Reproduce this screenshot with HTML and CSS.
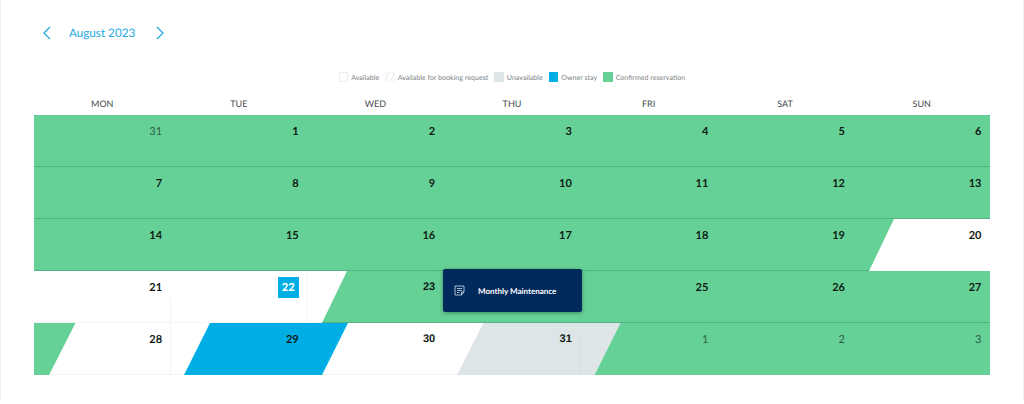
FILE: index.html
```html
<!DOCTYPE html>
<html lang="en">
<head>
<meta charset="utf-8">
<title>August 2023</title>
<link rel="stylesheet" href="styles.css">
</head>
<body>
<main class="page">
  <header class="month-nav">
    <svg class="chevron" width="10" height="14" viewBox="0 0 10 14"><path d="M8 1 2 7l6 6"/></svg>
    <h1 class="month-title">August 2023</h1>
    <svg class="chevron" width="10" height="14" viewBox="0 0 10 14"><path d="M2 1l6 6-6 6"/></svg>
  </header>
  <ul class="legend">
    <li class="legend-item"><span class="swatch swatch-available"></span>Available</li>
    <li class="legend-item"><span class="swatch swatch-request"></span>Available for booking request</li>
    <li class="legend-item"><span class="swatch swatch-unavailable"></span>Unavailable</li>
    <li class="legend-item"><span class="swatch swatch-owner"></span>Owner stay</li>
    <li class="legend-item"><span class="swatch swatch-confirmed"></span>Confirmed reservation</li>
  </ul>
  <section class="calendar">
    <div class="weekdays"><span>MON</span><span>TUE</span><span>WED</span><span>THU</span><span>FRI</span><span>SAT</span><span>SUN</span></div>
    <div class="week week-green">
      <span class="day muted">31</span><span class="day">1</span><span class="day">2</span><span class="day">3</span><span class="day">4</span><span class="day">5</span><span class="day">6</span>
    </div>
    <div class="week week-green">
      <span class="day">7</span><span class="day">8</span><span class="day">9</span><span class="day">10</span><span class="day">11</span><span class="day">12</span><span class="day">13</span>
    </div>
    <div class="week">
      <svg class="bands" viewBox="0 0 956 52" preserveAspectRatio="none">
        <polygon class="band-green" points="0,0 860,0 835,52 0,52"/>
        <path class="edge" d="M0 51.500H835"/>
      </svg>
      <span class="day">14</span><span class="day">15</span><span class="day">16</span><span class="day">17</span><span class="day">18</span><span class="day">19</span><span class="day">20</span>
    </div>
    <div class="week">
      <svg class="bands" viewBox="0 0 956 52" preserveAspectRatio="none">
        <path class="gridline" d="M136.500 26V52M273 0V52M0 51.500H288"/>
        <polygon class="band-green" points="313,0 956,0 956,52 288,52"/>
        <path class="edge" d="M288 51.500H956"/>
      </svg>
      <span class="day">21</span><span class="day"><b class="today">22</b></span><span class="day alt">23</span><span class="day">24</span><span class="day">25</span><span class="day">26</span><span class="day">27</span>
      <div class="note">
        <svg class="note-icon" width="11" height="11" viewBox="0 0 11 11"><path d="M1 1h9v6L7.500 10H1zM3 3.500h5M3 5.500h5M3 7.500h2.500M7.500 10V7H10"/></svg>
        <span>Monthly Maintenance</span>
      </div>
    </div>
    <div class="week">
      <svg class="bands" viewBox="0 0 956 52" preserveAspectRatio="none">
        <path class="gridline" d="M136.500 0V52M273 0V52M0 51.500H423"/>
        <polygon class="band-green" points="0,0 41.500,0 15,52 0,52"/>
        <polygon class="band-blue" points="176,0 314,0 288,52 150,52"/>
        <polygon class="band-grey" points="449.500,0 586.500,0 560.500,52 423,52"/>
        <path class="grey-line" d="M546.500 13V52"/>
        <polygon class="band-green" points="586.500,0 956,0 956,52 560.500,52"/>
      </svg>
      <span class="day">28</span><span class="day">29</span><span class="day alt">30</span><span class="day alt">31</span><span class="day muted">1</span><span class="day muted">2</span><span class="day muted">3</span>
    </div>
  </section>
</main>
</body>
</html>
```
FILE: styles.css
```css
* { box-sizing: border-box; }
html, body { margin: 0; background: #fff; }
body {
  font-family: Lato, "Open Sans", sans-serif;
  overflow: hidden;
  text-rendering: geometricPrecision;
}
.page {
  height: 400px;
  padding: 0 33px;
  border-left: 1px solid #f1f1f1;
  border-right: 1px solid #f1f1f1;
}
.month-nav {
  display: flex;
  align-items: center;
  height: 66px;
  padding-left: 8px;
}
.chevron { fill: none; stroke: #22a9de; stroke-width: 1.300; flex: none; }
.month-title {
  margin: 0 0 0 17px;
  width: 85.500px;
  font-size: 11.700px;
  font-weight: 400;
  color: #22a9de;
  white-space: nowrap;
}
.legend {
  display: flex;
  justify-content: center;
  align-items: center;
  gap: 6px;
  margin: 0;
  padding: 0;
  height: 22px;
  list-style: none;
  font-size: 7.100px;
  color: #7d8588;
}
.legend-item { display: flex; align-items: center; gap: 3px; white-space: nowrap; }
.swatch { width: 9.500px; height: 9.500px; flex: none; }
.swatch-available { border: 1px solid #eceeef; background: #fff; }
.swatch-request {
  border: 1px solid #f4f5f6;
  background: repeating-linear-gradient(115deg, #fff 0 2px, #e9ecee 2px 3px, #fff 3px 5px);
}
.swatch-unavailable { background: #dde5e7; }
.swatch-owner { background: #00aee6; }
.swatch-confirmed { background: #65d196; }
.weekdays {
  display: grid;
  grid-template-columns: repeat(7, 1fr);
  height: 26.500px;
  padding-top: 10px;
  text-align: center;
  font-size: 9px;
  line-height: 11px;
  color: #454a4d;
}
.week {
  position: relative;
  display: grid;
  grid-template-columns: repeat(7, 1fr);
  height: 52px;
}
.week-green {
  background: #65d196;
  border-bottom: 1px solid #52b384;
}
.bands {
  position: absolute;
  inset: 0;
  width: 100%;
  height: 100%;
}
.band-green { fill: #65d196; }
.band-blue { fill: #00aee6; }
.band-grey { fill: #dde5e7; }
.gridline { fill: none; stroke: #f4f5f5; stroke-width: 1; }
.grey-line { fill: none; stroke: #d5dfe2; stroke-width: 1; }
.edge { fill: none; stroke: #52b384; stroke-width: 1; }
.day {
  position: relative;
  display: flex;
  justify-content: flex-end;
  align-items: flex-start;
  padding: 10px 8.500px 0 0;
  font-size: 11px;
  line-height: 13px;
  font-weight: 700;
  color: #0f1a14;
}
.day.muted { font-weight: 400; color: #2e6046; }
.day.alt { font-family: "Liberation Sans", Arial, sans-serif; }
.today {
  display: block;
  width: 21px;
  height: 21px;
  margin-top: -4px;
  text-align: center;
  line-height: 21px;
  background: #00aee6;
  color: #fff;
}
.note {
  position: absolute;
  left: 409px;
  top: -2px;
  width: 139px;
  height: 43px;
  display: flex;
  align-items: center;
  gap: 13px;
  padding: 1px 0 0 11px;
  background: #012a5c;
  border-radius: 2px;
  box-shadow: 0 1px 4px rgba(0, 0, 0, .35);
  color: #fff;
  font-size: 8px;
  font-weight: 700;
  white-space: nowrap;
}
.note-icon { fill: none; stroke: #dbe3ec; stroke-width: .8; flex: none; }
```
